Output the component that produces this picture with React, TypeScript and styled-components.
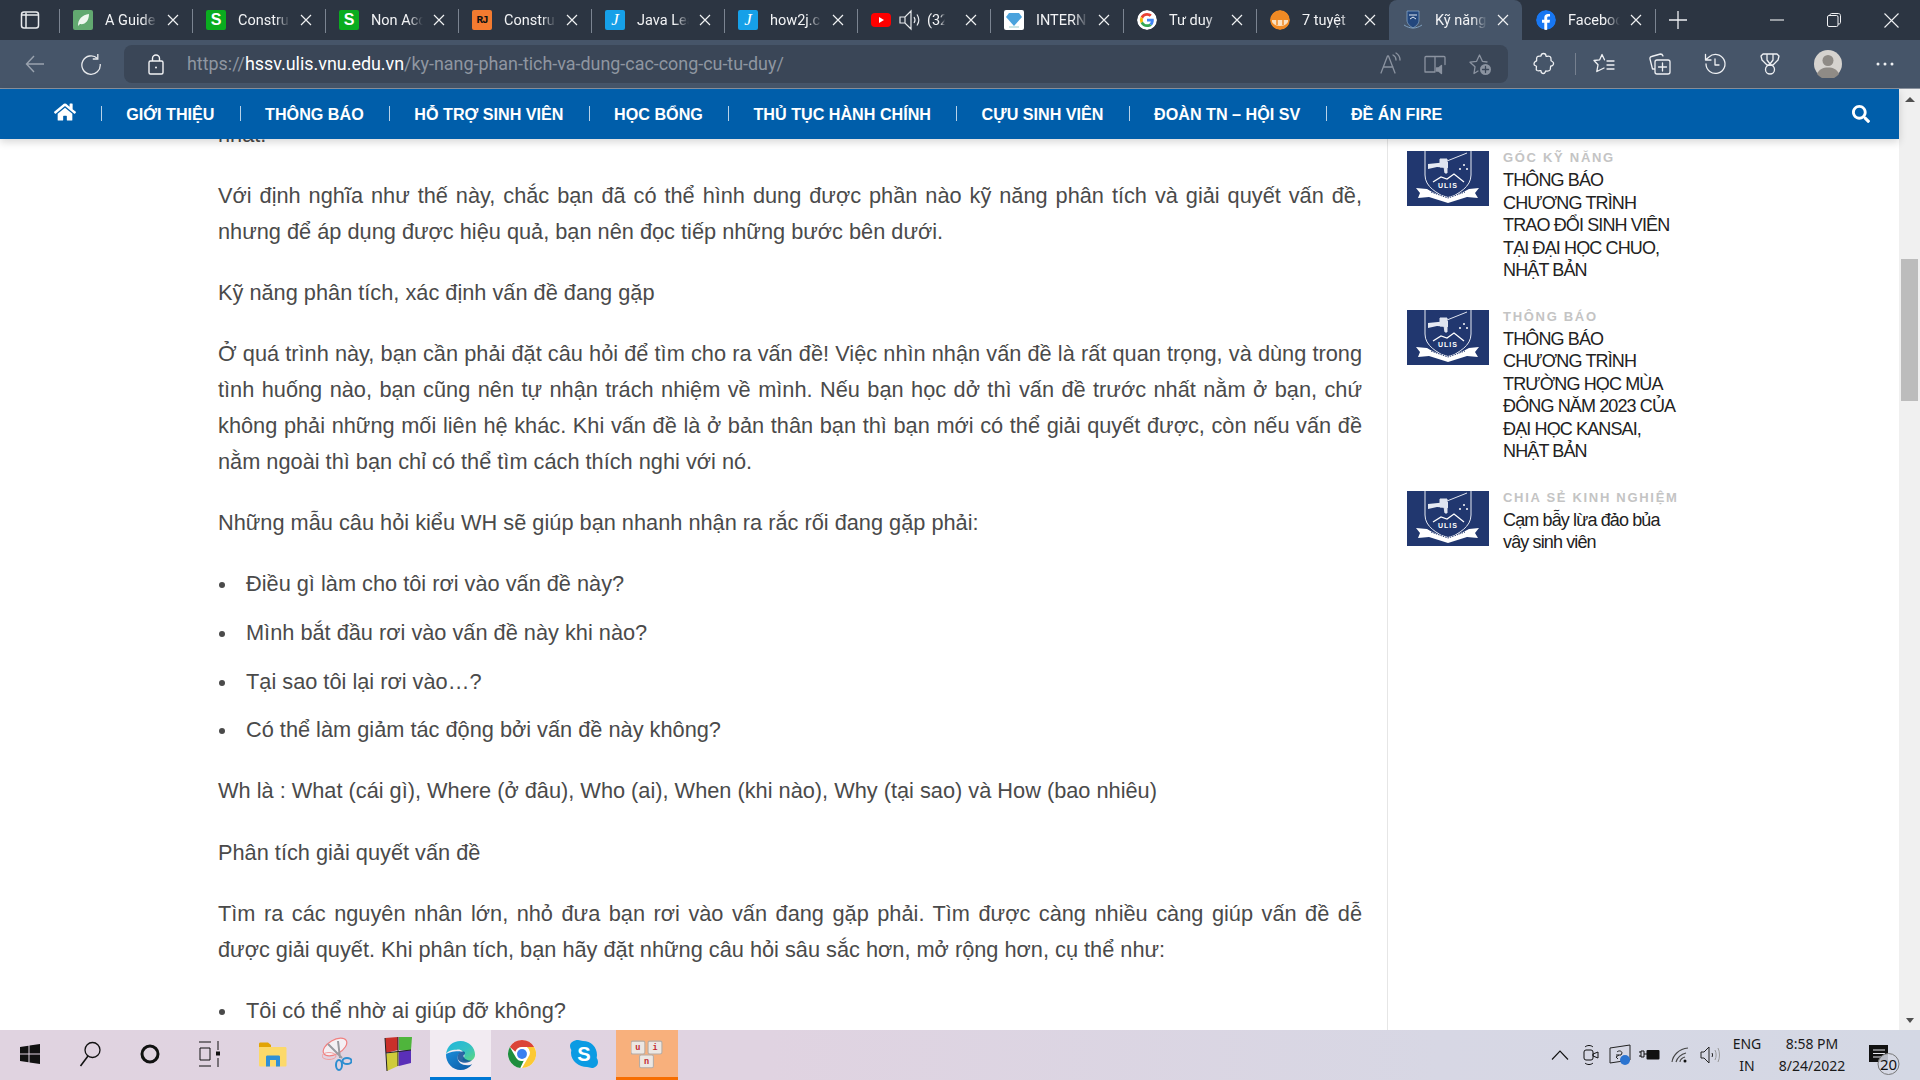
import React from "react";
import styled, { createGlobalStyle } from "styled-components";
import { FaHome, FaSearch } from "react-icons/fa";

const Global = createGlobalStyle`
  html, body { margin: 0; padding: 0; background: #fff; overflow: hidden; }
  * { box-sizing: border-box; }
`;

const Shell = styled.div`
  width: 1920px; height: 1080px; display: flex; flex-direction: column; overflow: hidden;
  font-family: "Liberation Sans", Arial, sans-serif;
`;

/* ---------- Tab strip ---------- */
const TabStrip = styled.div`
  height: 40px; flex: none; display: flex; align-items: stretch; background: #2c3542; color: #fff;
`;
const TabsToggle = styled.div`
  width: 59px; flex: none; display: flex; align-items: center; justify-content: center;
`;
const Tab = styled.div<{ $active?: boolean; $noSep?: boolean }>`
  width: 133px; flex: none; position: relative; display: flex; align-items: center; padding-left: 14px;
  background: ${p => (p.$active ? "#465569" : "transparent")};
  border-radius: 8px 8px 0 0;
  &::before {
    content: ""; position: absolute; left: 0; top: 9px; height: 24px; width: 1px;
    background: ${p => (p.$noSep ? "transparent" : "#7b8491")};
  }
`;
const Favicon = styled.span<{ $bg?: string; $round?: boolean; $color?: string }>`
  width: 20px; height: 20px; flex: none; display: flex; align-items: center; justify-content: center;
  background: ${p => p.$bg || "transparent"}; color: ${p => p.$color || "#fff"};
  border-radius: ${p => (p.$round ? "50%" : "2px")}; overflow: hidden;
  font: bold 16px/20px "Liberation Sans", sans-serif;
`;
const ItalicMark = styled.span`
  font: italic 17px/20px "Liberation Serif", serif;
`;
const SmallMark = styled.span`
  font: bold 11px/20px "Liberation Mono", monospace; letter-spacing: -1px; color: #111;
`;
const TabLabel = styled.span<{ $w?: number; $ml?: number }>`
  width: ${p => p.$w ?? 52}px; margin-left: ${p => p.$ml ?? 12}px; flex: none; overflow: hidden; white-space: nowrap;
  font: 14.5px/20px Roboto, sans-serif; color: #f2f3f5; padding-top: 1px;
  -webkit-mask-image: linear-gradient(to right, #000 72%, transparent 100%);
  mask-image: linear-gradient(to right, #000 72%, transparent 100%);
`;
const TabClose = styled.span`
  position: absolute; right: 12.5px; top: 13px; width: 14px; height: 14px; display: flex;
`;
const SoundIcon = styled.span`
  display: flex; margin-left: 7px; flex: none;
`;
const NewTab = styled.div`
  width: 44px; margin-left: 1px; flex: none; position: relative; display: flex; align-items: center; justify-content: center;
  &::before { content: ""; position: absolute; left: -1px; top: 9px; height: 24px; width: 1px; background: #7b8491; }
`;
const Spacer = styled.div`flex: 1;`;
const WinButton = styled.div<{ $w: number }>`
  width: ${p => p.$w}px; flex: none; display: flex; align-items: center; justify-content: center;
`;

/* ---------- Toolbar ---------- */
const Toolbar = styled.div`
  height: 49px; flex: none; display: flex; align-items: center; padding-left: 7px;
  background: #465569; border-bottom: 1px solid #8a929e;
`;
const ToolSlot = styled.div<{ $w: number; $ml?: number }>`
  width: ${p => p.$w}px; margin-left: ${p => p.$ml ?? 0}px; height: 38px; flex: none;
  display: flex; align-items: center; justify-content: center;
`;
const AddressBar = styled.div`
  width: 1384px; margin-left: 6px; height: 38px; flex: none; border-radius: 8px; background: #3a4657;
  display: flex; align-items: center; padding-left: 22px; padding-right: 6px;
`;
const Url = styled.div`
  margin-left: 21px; font: 17.9px/38px Roboto, sans-serif; color: #8f96a1; white-space: nowrap; flex: 1;
  b { font-weight: 400; color: #fff; }
`;
const ToolDivider = styled.div`
  width: 1px; height: 22px; background: #76808f; margin-left: 3px; flex: none;
`;

/* ---------- Page ---------- */
const Viewport = styled.div`
  flex: 1; min-height: 0; display: flex; background: #fff;
`;
const PageColumn = styled.div`
  flex: 1; min-width: 0; display: flex; flex-direction: column;
`;
const Nav = styled.nav`
  height: 50px; flex: none; background: #005eaa; color: #fff; display: flex; align-items: center;
  position: relative; z-index: 2; box-shadow: 0 3px 8px rgba(0, 0, 0, 0.16); padding-left: 54px; padding-right: 29px;
`;
const NavHome = styled.a`
  width: 47px; flex: none; display: flex; font-size: 0; margin-top: -4px;
`;
const NavItem = styled.a`
  display: block; padding: 0 25.3px; font: bold 16.15px/16px "Liberation Sans", Arial, sans-serif; color: #fff; white-space: nowrap; position: relative;
  &::before { content: ""; position: absolute; left: 0; top: 0; height: 15px; width: 1px; background: #b8d2e8; }
`;
const NavSearch = styled.a`
  margin-left: auto; display: flex; font-size: 0;
`;
const Scroller = styled.div`
  flex: 1; min-height: 0; display: flex; overflow: hidden;
`;
const Article = styled.article`
  width: 1387px; flex: none; padding: 0 25px 0 218px; margin-top: -22.5px;
  font-size: 21.76px; line-height: 36px; color: #4a4a4a;
  p { margin: 0 0 25.2px; text-align: justify; }
  ul { margin: 0 0 25.2px; padding-left: 28px; list-style: none; }
  li { margin-bottom: 12.6px; position: relative; }
  li::before {
    content: ""; position: absolute; left: -27px; top: 16px; width: 6px; height: 6px; border-radius: 50%; background: #4a4a4a;
  }
`;
const Sidebar = styled.aside`
  flex: 1; border-left: 1px solid #e6e6e6; padding: 12px 0 0 19px; display: flex; flex-direction: column; gap: 28.2px;
`;
const SideItem = styled.div`
  display: flex; gap: 14px; align-items: flex-start;
`;
const Thumb = styled.div`
  width: 82px; height: 55px; flex: none; display: flex;
`;
const SideText = styled.div`
  width: 178px; flex: none;
`;
const SideCat = styled.div`
  font: bold 13px/13px "Liberation Sans", sans-serif; letter-spacing: 1.7px; color: #c4c4c4; margin-bottom: 5px; white-space: nowrap;
`;
const SideTitle = styled.div`
  font: 18px/22.5px "Liberation Sans", sans-serif; letter-spacing: -0.87px; color: #222;
`;
const ScrollTrack = styled.div`
  width: 21px; flex: none; background: #f0f0f0; display: flex; flex-direction: column; align-items: center; padding-top: 8px;
`;
const ArrowUp = styled.div`
  width: 0; height: 0; border-left: 5px solid transparent; border-right: 5px solid transparent; border-bottom: 5px solid #505050;
`;
const ArrowDown = styled.div`
  width: 0; height: 0; border-left: 4px solid transparent; border-right: 4px solid transparent; border-top: 5px solid #505050; margin-top: auto; margin-bottom: 7px;
`;
const ScrollThumb = styled.div`
  width: 17px; height: 142px; background: #bcbcbc; margin-top: 157px;
`;

/* ---------- Taskbar ---------- */
const Taskbar = styled.div`
  height: 50px; flex: none; display: flex; align-items: stretch; color: #111; padding-right: 8px;
  background: linear-gradient(to right, #e0d3e0 0%, #e0d3e1 40%, #d7d7e4 75%, #d4d8e4 100%);
`;
const TaskSlot = styled.div<{ $w: number; $state?: "edge" | "uni" }>`
  width: ${p => p.$w}px; flex: none; display: flex; align-items: center; justify-content: center;
  background: ${p => (p.$state === "edge" ? "#f2ebf2" : p.$state === "uni" ? "#f8b07c" : "transparent")};
  border-bottom: 3px solid ${p => (p.$state === "edge" ? "#0078d4" : p.$state === "uni" ? "#f76d00" : "transparent")};
  padding-top: ${p => (p.$state ? 3 : 0)}px;
`;
const TrayIcon = styled.div<{ $w: number }>`
  width: ${p => p.$w}px; flex: none; display: flex; align-items: center; justify-content: center;
`;
const TrayText = styled.div<{ $w: number }>`
  width: ${p => p.$w}px; flex: none; display: flex; flex-direction: column; justify-content: center; align-items: center;
  font: 14px/22px "Noto Sans", sans-serif; color: #1a1a1a;
`;

/* ---------- Icons ---------- */
const S = { fill: "none", stroke: "currentColor", strokeWidth: 1.3, strokeLinecap: "round" as const, strokeLinejoin: "round" as const };

const Ico: React.FC<{ s?: number; c?: string; children: React.ReactNode }> = ({ s = 24, c = "#eef0f3", children }) => (
  <svg width={s} height={s} viewBox="0 0 24 24" style={{ color: c, display: "block" }} {...S}>{children}</svg>
);

const CloseX = () => (
  <svg width="14" height="14" viewBox="0 0 14 14"><path d="M2 2 12 12M12 2 2 12" stroke="#f0f1f3" strokeWidth="1.2" /></svg>
);
const Speaker = () => (
  <svg width="24" height="24" viewBox="0 0 24 24" fill="none" stroke="#e8eaed" strokeWidth="1.2">
    <path d="M2 9h5l6-6v18l-6-6H2zM7 9v6M16 9c1.200 1.800 1.200 4.200 0 6M19 6.500c2.200 3.300 2.200 7.700 0 11" />
  </svg>
);
const Crest = ({ w = 82, h = 55 }: { w?: number; h?: number }) => (
  <svg width={w} height={h} viewBox="0 0 82 55" style={{ display: "block" }}>
    <rect width="82" height="55" fill="#21376f" />
    <path d="M18 0V24C18 36 30 42 41 48C52 42 64 36 64 24V0" fill="none" stroke="#e6eaf3" strokeWidth="1" />
    <path d="M21 13 41 11V17L30 16 21 18Z" fill="#e6eaf3" />
    <path d="M33 8h7v14h-2l-1-6h-4zM40 10 60 2" fill="#dfe4ef" stroke="#dfe4ef" strokeWidth="1" />
    <circle cx="57" cy="14" r="1" fill="#fff" /><circle cx="53" cy="18" r="1" fill="#fff" /><circle cx="60" cy="18" r="1" fill="#fff" />
    <path d="M26 31 34 26 40 28 47 23 57 31" fill="none" stroke="#fff" strokeWidth="1.3" />
    <text x="41" y="36.500" textAnchor="middle" fontFamily="Liberation Sans" fontWeight="bold" fontSize="7" letterSpacing="1" fill="#fff">ULIS</text>
    <path d="M9 37 20 38C28 43 35 44 41 46C48 44 55 42 62 38L72 37 68 42 71 47 60 46 41 52 22 46 11 47 13 42Z" fill="#fff" />
    <path d="M24 41 41 47 58 41" fill="none" stroke="#21376f" strokeWidth="1" strokeDasharray="1.500 1" />
  </svg>
);
const Leaf = () => (
  <svg width="14" height="14" viewBox="0 0 14 14"><path d="M2 13C2 6 6 2 13 1 13 8 9 12 4 11Z" fill="#eef7ee" /></svg>
);
const GoogleG = () => (
  <svg width="20" height="20" viewBox="0 0 48 48">
    <circle cx="24" cy="24" r="24" fill="#fff" />
    <g transform="translate(7 7) scale(.71)">
      <path fill="#EA4335" d="M24 9.500c3.500 0 6.700 1.200 9.200 3.600l6.900-6.900C35.900 2.400 30.500 0 24 0 14.600 0 6.500 5.400 2.600 13.200l8 6.200C12.400 13.700 17.700 9.500 24 9.500z" />
      <path fill="#4285F4" d="M46.900 24.500c0-1.600-.1-3.100-.4-4.500H24v9h12.900c-.6 3-2.200 5.500-4.700 7.200l7.700 6c4.500-4.200 7-10.300 7-17.700z" />
      <path fill="#FBBC05" d="M10.500 28.600A14.500 14.500 0 0 1 10.500 19.400l-8-6.200a24 24 0 0 0 0 21.600z" />
      <path fill="#34A853" d="M24 48c6.500 0 11.900-2.100 15.900-5.800l-7.700-6c-2.200 1.500-5 2.300-8.200 2.300-6.300 0-11.600-4.200-13.500-9.900l-8 6.200C6.500 42.600 14.600 48 24 48z" />
    </g>
  </svg>
);
const Diamond = () => (
  <svg width="20" height="20" viewBox="0 0 20 20"><rect width="20" height="20" fill="#fff" /><path d="M5 3h10l3 4-8 9-8-9z" fill="#4ba3dd" /><path d="M5 17h10" stroke="#9cc" strokeWidth="1" /></svg>
);
const YouTube = () => (
  <svg width="20" height="20" viewBox="0 0 20 20"><rect y="3" width="20" height="14" rx="4" fill="#f00" /><path d="M8 7l5 3-5 3z" fill="#fff" /></svg>
);
const Melon = () => (
  <svg width="20" height="20" viewBox="0 0 20 20"><circle cx="10" cy="10" r="10" fill="#f08a24" /><path d="M2 10h16v2c-2 3-5 4-8 4s-6-1-8-4z" fill="#fbe0c0" /><path d="M7 10v5M13 10v5" stroke="#f08a24" strokeWidth="1.500" /></svg>
);
const MiniCrest = () => (
  <svg width="20" height="20" viewBox="0 0 20 20">
    <path d="M4 1h12v9c0 4-3 6-6 8-3-2-6-4-6-8z" fill="#23477d" stroke="#8fb0d0" strokeWidth=".7" />
    <path d="M6 5h8M7 9l3-2 3 2" stroke="#dfe8f2" strokeWidth="1" fill="none" />
    <path d="M1 15c3 2 6 3 9 3s6-1 9-3" stroke="#7f9fbf" strokeWidth="1" fill="none" />
  </svg>
);
const FacebookF = () => (
  <svg width="20" height="20" viewBox="0 0 20 20"><circle cx="10" cy="10" r="10" fill="#1877f2" /><path d="M11.200 20v-7.300h2.400l.4-2.900h-2.800V8c0-.8.300-1.400 1.500-1.400H14V4.100c-.3 0-1.200-.1-2.100-.1-2.100 0-3.600 1.300-3.600 3.700v2.100H6v2.900h2.300V20z" fill="#fff" /></svg>
);

const EdgeLogo = () => (
  <svg width="31" height="31" viewBox="0 0 32 32">
    <defs>
      <linearGradient id="eg1" x1="0" y1="0" x2="1" y2="1"><stop offset="0" stopColor="#1fb5dc" /><stop offset=".55" stopColor="#35c1c5" /><stop offset="1" stopColor="#5fd97a" /></linearGradient>
      <linearGradient id="eg2" x1="0" y1="0" x2="1" y2="1"><stop offset="0" stopColor="#1a8cd8" /><stop offset="1" stopColor="#0c59a4" /></linearGradient>
    </defs>
    <path d="M1 15C2 6 8 1 16 1c9 0 15 7 15 14 0 5-4 7-8 7-3 0-5-1-5-2 0-1 2-1 2-4 0-4-4-7-8-6-6 0-10 2-11 5z" fill="url(#eg1)" />
    <path d="M1 15c0 9 7 16 15 16 5 0 9-2 12-6-1 .5-3 1-5 1-6 0-10-3-10-8 0-3 2-5 4-6-6-1-14 1-16 3z" fill="url(#eg2)" />
    <path d="M13 18c0-4 3-7 7-6 1.500 1 0 3-1 4 0 3 4 6 9 5-4 4-15 3-15-3z" fill="#0b4f97" opacity=".85" />
  </svg>
);
const ChromeLogo = () => (
  <svg width="28" height="28" viewBox="0 0 48 48">
    <circle cx="24" cy="24" r="24" fill="#fff" />
    <path d="M24 0a24 24 0 0 1 20.800 12H24a12 12 0 0 0-11.400 8.300L3.200 12A24 24 0 0 1 24 0z" fill="#db4437" />
    <path d="M44.800 12A24 24 0 0 1 24 48l10.400-18a12 12 0 0 0-2-18z" fill="#fcc934" />
    <path d="M3.200 12 13.600 30A12 12 0 0 0 27 35.600L21 47.800A24 24 0 0 1 3.200 12z" fill="#1e8e3e" />
    <circle cx="24" cy="24" r="11" fill="#fff" />
    <circle cx="24" cy="24" r="8.500" fill="#3b7ff0" />
  </svg>
);
const SkypeLogo = () => (
  <svg width="28" height="28" viewBox="0 0 28 28">
    <path d="M8 0c2 0 3 1 5 1 8 0 14 6 14 14 0 1-.3 2-.3 3 .9 1.300 1.300 3 1.300 4 0 3.500-3 6-6 6-2 0-3-1-5-1C9 27 1 21 1 13c0-1 .3-2 .3-3C.5 8.700 0 7.300 0 6c0-3.500 4-6 8-6z" fill="#0b9be3" />
    <text x="14" y="21" textAnchor="middle" fontFamily="Liberation Sans" fontWeight="bold" fontSize="20" fill="#fff">S</text>
  </svg>
);
const Folder = () => (
  <svg width="28" height="28" viewBox="0 0 28 28">
    <path d="M0 4c0-1 .5-1.500 1.500-1.500H9l3 2.500v4H0z" fill="#e2a405" />
    <path d="M0 7h26c1 0 1.500.5 1.500 1.500V25c0 1-.5 1.500-1.500 1.500H1.500C.5 26.500 0 26 0 25z" fill="#fcd96a" />
    <path d="M7 26.500V17c0-1 .5-1.500 1.500-1.500h11c1 0 1.500.5 1.500 1.500v9.500h-4V20h-6v6.500z" fill="#2f8fd6" />
  </svg>
);
const Snip = () => (
  <svg width="30" height="36" viewBox="0 0 30 36" fill="none">
    <ellipse cx="13" cy="11" rx="13" ry="7" transform="rotate(-30 13 11)" stroke="#f08080" strokeWidth="1.200" fill="#f4f0f4" />
    <ellipse cx="7" cy="20" rx="7" ry="3.500" stroke="#f0a0a0" strokeWidth="1" />
    <path d="M6 8 20 22M16 5l2 17" stroke="#9a9aa0" strokeWidth="2" />
    <ellipse cx="17" cy="29" rx="3" ry="5" stroke="#2d8ed0" strokeWidth="2" />
    <ellipse cx="25" cy="25" rx="4.500" ry="3" stroke="#2d8ed0" strokeWidth="2" />
  </svg>
);
const Colorful = () => (
  <svg width="30" height="36" viewBox="0 0 30 36">
    <path d="M1 2 14 1 14 14 2 17z" fill="#c9302a" />
    <path d="M15 1 28 1 27 14 15 14z" fill="#4fb53c" />
    <path d="M2 18 14 15 14 30 3 35z" fill="#cfcb3a" />
    <path d="M15 15 27 14 27 27 15 30z" fill="#5a2fb8" />
    <path d="M1 2 3 35M14 1V30M2 17 27 14" stroke="#222" strokeWidth="1" fill="none" />
  </svg>
);
const UniKey = () => (
  <svg width="32" height="30" viewBox="0 0 30 28" fontFamily="Liberation Mono" fontWeight="bold" fontSize="8" textAnchor="middle">
    <rect x="0" y="1" width="13" height="12" rx="1.500" fill="#ece7e3" stroke="#b5aca5" /><text x="6.500" y="9.500" fill="#c1272d">u</text>
    <rect x="16" y="1" width="13" height="12" rx="1.500" fill="#ece7e3" stroke="#b5aca5" /><text x="22.500" y="9.500" fill="#c1272d">i</text>
    <rect x="8" y="14" width="13" height="12" rx="1.500" fill="#ece7e3" stroke="#b5aca5" /><text x="14.500" y="22.500" fill="#c1272d">n</text>
  </svg>
);
const WinLogo = () => (
  <svg width="20" height="20" viewBox="0 0 20 20" fill="#111"><path d="M0 3 8.500 1.800V9.500H0zM9.500 1.600 20 0V9.500H9.500zM0 10.500H8.500V18.200L0 17zM9.500 10.500H20V20L9.500 18.400z" /></svg>
);

const tabs = [
  { label: "A Guide", icon: <Favicon $bg="#62a970"><Leaf /></Favicon> },
  { label: "Constru", icon: <Favicon $bg="#0aac1f">S</Favicon> },
  { label: "Non Acc", icon: <Favicon $bg="#0aac1f">S</Favicon> },
  { label: "Constru", icon: <Favicon $bg="#f47b30"><SmallMark>RJ</SmallMark></Favicon> },
  { label: "Java Lea", icon: <Favicon $bg="#16a0e8"><ItalicMark>J</ItalicMark></Favicon> },
  { label: "how2j.c", icon: <Favicon $bg="#16a0e8"><ItalicMark>J</ItalicMark></Favicon> },
  { label: "(32", icon: <Favicon><YouTube /></Favicon>, sound: true },
  { label: "INTERN", icon: <Favicon><Diamond /></Favicon> },
  { label: "Tư duy", icon: <Favicon $round><GoogleG /></Favicon> },
  { label: "7 tuyệt", icon: <Favicon $round><Melon /></Favicon> },
  { label: "Kỹ năng", icon: <Favicon><MiniCrest /></Favicon>, active: true },
  { label: "Facebook", icon: <Favicon $round><FacebookF /></Favicon>, noSep: true },
];

const navItems = ["GIỚI THIỆU", "THÔNG BÁO", "HỖ TRỢ SINH VIÊN", "HỌC BỔNG", "THỦ TỤC HÀNH CHÍNH", "CỰU SINH VIÊN", "ĐOÀN TN – HỘI SV", "ĐỀ ÁN FIRE"];

const sideItems = [
  { cat: "GÓC KỸ NĂNG", title: "THÔNG BÁO CHƯƠNG TRÌNH TRAO ĐỔI SINH VIÊN TẠI ĐẠI HỌC CHUO, NHẬT BẢN" },
  { cat: "THÔNG BÁO", title: "THÔNG BÁO CHƯƠNG TRÌNH TRƯỜNG HỌC MÙA ĐÔNG NĂM 2023 CỦA ĐẠI HỌC KANSAI, NHẬT BẢN" },
  { cat: "CHIA SẺ KINH NGHIỆM", title: "Cạm bẫy lừa đảo bủa vây sinh viên" },
];

export default function App() {
  return (
    <Shell>
      <Global />
      <TabStrip>
        <TabsToggle>
          <svg width="20" height="20" viewBox="0 0 20 20" fill="none" stroke="#e8eaed" strokeWidth="1.500">
            <rect x="1.500" y="2" width="17" height="16" rx="2.500" />
            <path d="M6 2.500V18M1.500 5h17" />
          </svg>
        </TabsToggle>
        {tabs.map((t, i) => (
          <Tab key={i} $active={t.active} $noSep={t.active || t.noSep}>
            {t.icon}
            {t.sound && <SoundIcon><Speaker /></SoundIcon>}
            <TabLabel $w={t.sound ? 18 : 52} $ml={t.sound ? 5 : 12}>{t.label}</TabLabel>
            <TabClose><CloseX /></TabClose>
          </Tab>
        ))}
        <NewTab>
          <svg width="18" height="18" viewBox="0 0 18 18"><path d="M9 0V18M0 9H18" stroke="#eef0f3" strokeWidth="1.300" /></svg>
        </NewTab>
        <Spacer />
        <WinButton $w={57}><svg width="14" height="14" viewBox="0 0 14 14"><path d="M0 7H14" stroke="#f0f1f3" strokeWidth="1.100" /></svg></WinButton>
        <WinButton $w={57}><svg width="14" height="14" viewBox="0 0 14 14" fill="none" stroke="#f0f1f3" strokeWidth="1"><rect x=".5" y="2.500" width="10.500" height="11" rx="1.500" /><path d="M3 2.500V2c0-.8.7-1.500 1.500-1.500h7c1 0 2 1 2 2v7c0 .8-.7 1.500-1.500 1.500H11" /></svg></WinButton>
        <WinButton $w={58}><svg width="15" height="15" viewBox="0 0 15 15"><path d="M.5.5 14.500 14.500M14.500.5.5 14.500" stroke="#f0f1f3" strokeWidth="1.100" /></svg></WinButton>
      </TabStrip>

      <Toolbar>
        <ToolSlot $w={56}>
          <svg width="20" height="20" viewBox="0 0 20 20" fill="none" stroke="#9aa3af" strokeWidth="1.400"><path d="M19 10H1.500M9 2 1.500 10 9 18" /></svg>
        </ToolSlot>
        <ToolSlot $w={55}>
          <svg width="22" height="22" viewBox="0 0 22 22" fill="none" stroke="#e8eaed" strokeWidth="1.300"><path d="M17.500 5.500A9.200 9.200 0 1 0 20.200 11" /><path d="M17.800 1v5h-5" /></svg>
        </ToolSlot>
        <AddressBar>
          <svg width="20" height="22" viewBox="0 0 20 22" fill="none" stroke="#f2f3f5" strokeWidth="1.400"><rect x="3" y="8" width="14" height="13" rx="1.500" /><path d="M6.500 8V5.500a3.500 3.500 0 0 1 7 0V8" /><circle cx="10" cy="14.500" r="1" fill="#f2f3f5" stroke="none" /></svg>
          <Url>https://<b>hssv.ulis.vnu.edu.vn</b>/ky-nang-phan-tich-va-dung-cac-cong-cu-tu-duy/</Url>
          <ToolSlot $w={45}><Ico c="#8b93a0"><path d="M3 21 9.500 4h1L17 21M5.500 15h9.500M15 3c2 1 3 2.500 3 5M18 1c2.500 1.500 4 4 4 7" /></Ico></ToolSlot>
          <ToolSlot $w={45}><Ico c="#8b93a0"><path d="M12 4.500H3a1 1 0 0 0-1 1V20h10zM12 4.500h9a1 1 0 0 1 1 1v7M12 20V4.500" /><path d="M13.500 16h2l3-2.500v8l-3-2.500h-2z" fill="#8b93a0" /></Ico></ToolSlot>
          <ToolSlot $w={45}><Ico c="#8b93a0"><path d="M10 19 6 21.500 7 14.800 2 10.200 8.600 9.300 11.500 3 14.400 9.300M14.400 9.300 19 10" /><circle cx="17.500" cy="17.500" r="5.500" fill="#8b93a0" stroke="none" /><path d="M17.500 14.500v6M14.500 17.500h6" stroke="#3a4657" strokeWidth="1.300" /></Ico></ToolSlot>
        </AddressBar>
        <ToolSlot $w={56} $ml={8}><Ico><path d="M9 4c0-2 1-2.500 2.500-2.500S14 2 14 4c0 1 2-.500 4 .5 1.500 1 1 3 1 4 0 1 2 .5 2.500 2.500S20 14 19 14c-1 0 0 2-1 4-1 1.500-3 1-4 1-1 0-.5 2.500-2.500 2.500S9 20 9 19c0-1-2 .5-4-.5-1.500-1-.5-3-.5-4s-2.500-.5-2.500-2.500S4 9 4.500 9 4 7 5 5c1-1.500 4-.5 4-1z" /></Ico></ToolSlot>
        <ToolDivider />
        <ToolSlot $w={58}><Ico><path d="M11.500 7.800 9 2.500 6.700 7.800 1 8.500 5 12.800 3.800 19.500 11 16" /><path d="M14 9h7M14 13h7M14 17h7" /></Ico></ToolSlot>
        <ToolSlot $w={52}><Ico><path d="M6 17H4.500L2 7a2 2 0 0 1 1.500-2.500l9-2.500c1.500 0 2 .5 2.500 2M9 8h11a2 2 0 0 1 2 2v10a2 2 0 0 1-2 2H9a2 2 0 0 1-2-2V10a2 2 0 0 1 2-2zM14.500 11v8M10.500 15h8" /></Ico></ToolSlot>
        <ToolSlot $w={58}><Ico><path d="M3 12a9.500 9.500 0 1 0 3-7L2.500 8M2.500 2.500V8H8M12 7v6h4" /></Ico></ToolSlot>
        <ToolSlot $w={52}><Ico><path d="M5 2h14l2 2-1 4-5 5H9L4 8 3 4zM9 3v5l3 4 3-4V3" /><circle cx="12" cy="17.500" r="4.500" /></Ico></ToolSlot>
        <ToolSlot $w={64}>
          <svg width="28" height="28" viewBox="0 0 28 28"><circle cx="14" cy="14" r="14" fill="#d6d3cf" /><circle cx="14" cy="10.500" r="5.500" fill="#8f8b86" /><path d="M3 24c2-5 6-6.500 11-6.500S23 19 25 24a14 14 0 0 1-22 0z" fill="#8f8b86" /></svg>
        </ToolSlot>
        <ToolSlot $w={50}>
          <svg width="18" height="4" viewBox="0 0 18 4" fill="#eef0f3"><circle cx="2" cy="2" r="1.500" /><circle cx="9" cy="2" r="1.500" /><circle cx="16" cy="2" r="1.500" /></svg>
        </ToolSlot>
      </Toolbar>

      <Viewport>
        <PageColumn>
          <Nav>
            <NavHome><FaHome size={22} color="#fff" /></NavHome>
            {navItems.map(n => <NavItem key={n}>{n}</NavItem>)}
            <NavSearch><FaSearch size={18} color="#fff" /></NavSearch>
          </Nav>
          <Scroller>
            <Article>
              <p>nhất.</p>
              <p>Với định nghĩa như thế này, chắc bạn đã có thể hình dung được phần nào kỹ năng phân tích và giải quyết vấn đề, nhưng để áp dụng được hiệu quả, bạn nên đọc tiếp những bước bên dưới.</p>
              <p>Kỹ năng phân tích, xác định vấn đề đang gặp</p>
              <p>Ở quá trình này, bạn cần phải đặt câu hỏi để tìm cho ra vấn đề! Việc nhìn nhận vấn đề là rất quan trọng, và dùng trong tình huống nào, bạn cũng nên tự nhận trách nhiệm về mình. Nếu bạn học dở thì vấn đề trước nhất nằm ở bạn, chứ không phải những mối liên hệ khác. Khi vấn đề là ở bản thân bạn thì bạn mới có thể giải quyết được, còn nếu vấn đề nằm ngoài thì bạn chỉ có thể tìm cách thích nghi với nó.</p>
              <p>Những mẫu câu hỏi kiểu WH sẽ giúp bạn nhanh nhận ra rắc rối đang gặp phải:</p>
              <ul>
                <li>Điều gì làm cho tôi rơi vào vấn đề này?</li>
                <li>Mình bắt đầu rơi vào vấn đề này khi nào?</li>
                <li>Tại sao tôi lại rơi vào…?</li>
                <li>Có thể làm giảm tác động bởi vấn đề này không?</li>
              </ul>
              <p>Wh là : What (cái gì), Where (ở đâu), Who (ai), When (khi nào), Why (tại sao) và How (bao nhiêu)</p>
              <p>Phân tích giải quyết vấn đề</p>
              <p>Tìm ra các nguyên nhân lớn, nhỏ đưa bạn rơi vào vấn đang gặp phải. Tìm được càng nhiều càng giúp vấn đề dễ được giải quyết. Khi phân tích, bạn hãy đặt những câu hỏi sâu sắc hơn, mở rộng hơn, cụ thể như:</p>
              <ul>
                <li>Tôi có thể nhờ ai giúp đỡ không?</li>
              </ul>
            </Article>
            <Sidebar>
              {sideItems.map(s => (
                <SideItem key={s.cat}>
                  <Thumb><Crest /></Thumb>
                  <SideText>
                    <SideCat>{s.cat}</SideCat>
                    <SideTitle>{s.title}</SideTitle>
                  </SideText>
                </SideItem>
              ))}
            </Sidebar>
          </Scroller>
        </PageColumn>
        <ScrollTrack>
          <ArrowUp />
          <ScrollThumb />
          <ArrowDown />
        </ScrollTrack>
      </Viewport>

      <Taskbar>
        <TaskSlot $w={60}><WinLogo /></TaskSlot>
        <TaskSlot $w={60}>
          <svg width="22" height="26" viewBox="0 0 22 26" fill="none" stroke="#111" strokeWidth="1.300"><circle cx="13.500" cy="9" r="7.500" /><path d="M9 15 1.500 25" strokeWidth="1.600" /></svg>
        </TaskSlot>
        <TaskSlot $w={60}>
          <svg width="20" height="20" viewBox="0 0 20 20" fill="none" stroke="#111" strokeWidth="3"><circle cx="10" cy="10" r="8" /></svg>
        </TaskSlot>
        <TaskSlot $w={60}>
          <svg width="22" height="26" viewBox="0 0 22 26" fill="none" stroke="#111" strokeWidth="1"><path d="M0 1h12M0 25h12M1 7h10v12H1zM19 0v9M19 17v9" /><rect x="17" y="10.500" width="4" height="4" fill="#111" stroke="none" /></svg>
        </TaskSlot>
        <TaskSlot $w={65}><Folder /></TaskSlot>
        <TaskSlot $w={63}><Snip /></TaskSlot>
        <TaskSlot $w={62}><Colorful /></TaskSlot>
        <TaskSlot $w={61} $state="edge"><EdgeLogo /></TaskSlot>
        <TaskSlot $w={61}><ChromeLogo /></TaskSlot>
        <TaskSlot $w={64}><SkypeLogo /></TaskSlot>
        <TaskSlot $w={62} $state="uni"><UniKey /></TaskSlot>
        <Spacer />
        <TrayIcon $w={36}><svg width="18" height="10" viewBox="0 0 18 10" fill="none" stroke="#111" strokeWidth="1.100"><path d="M1 9.500 9 1l8 8.500" /></svg></TrayIcon>
        <TrayIcon $w={26}><svg width="18" height="22" viewBox="0 0 18 22" fill="none" stroke="#111"><rect x="2" y="6" width="9" height="10" rx="2" /><path d="m11 10 5-2v6l-5-2zM3 3c2-2 6-2 8 0M3 19c2 2 6 2 8 0" /></svg></TrayIcon>
        <TrayIcon $w={32}><svg width="22" height="22" viewBox="0 0 22 22" fill="none" stroke="#222"><path d="M1 4 21 1v15L1 19zM8 8c2-2 5-1 5 1l-1 2H7M10 11l-3 2 2 2" /><circle cx="16" cy="16" r="5" fill="#2b74d0" stroke="none" /></svg></TrayIcon>
        <TrayIcon $w={28}><svg width="22" height="12" viewBox="0 0 22 12"><path d="M0 3h2M0 7h2M2 2h3v6H2zM5 5h3" stroke="#111" fill="none" /><rect x="7.500" y="1" width="13" height="9.500" rx="1" fill="#111" /></svg></TrayIcon>
        <TrayIcon $w={32}><svg width="18" height="16" viewBox="0 0 18 16" fill="none" stroke="#444" strokeWidth="1.100"><path d="M1 15C2 8 8 2 17 1M5 15c1-4 5-8 10-9M9 15c0-2 2-4 5-5" /><circle cx="14" cy="14" r="1.500" fill="#111" stroke="none" /></svg></TrayIcon>
        <TrayIcon $w={28}><svg width="20" height="18" viewBox="0 0 20 18" fill="none" stroke="#222"><path d="M1 6h3l5-5v16l-5-5H1z" /><path d="M12 7c.7 1.200.7 2.800 0 4" /><path d="M15 4c1.500 3 1.500 7 0 10M18 2c2 4 2 10 0 14" stroke="#999" /></svg></TrayIcon>
        <TrayText $w={46}><span>ENG</span><span>IN</span></TrayText>
        <TrayText $w={84}><span>8:58 PM</span><span>8/24/2022</span></TrayText>
        <TrayIcon $w={58}>
          <svg width="40" height="40" viewBox="0 0 40 40">
            <path d="M6 10H25V27H6z" fill="#111" />
            <path d="M10 15h12M10 18.500h12M10 22h8" stroke="#e8e8ee" strokeWidth="1" />
            <circle cx="25.500" cy="29" r="10.500" fill="rgba(213,216,228,.85)" stroke="#777" />
            <text x="25.500" y="34.500" textAnchor="middle" fontFamily="Noto Sans" fontSize="15" fill="#111">20</text>
          </svg>
        </TrayIcon>
      </Taskbar>
    </Shell>
  );
}
